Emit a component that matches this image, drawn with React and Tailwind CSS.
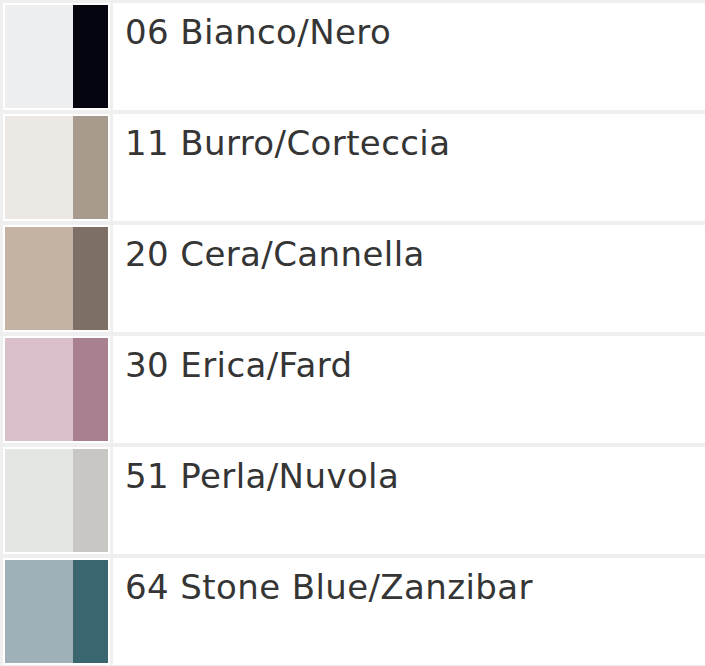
import React from "react";

const rows = [
  { label: "06 Bianco/Nero", a: "#eceeef", b: "#05050f" },
  { label: "11 Burro/Corteccia", a: "#ece9e4", b: "#a89b8e" },
  { label: "20 Cera/Cannella", a: "#c4b2a3", b: "#7d6e66" },
  { label: "30 Erica/Fard", a: "#d8bfc9", b: "#a8808f" },
  { label: "51 Perla/Nuvola", a: "#e3e6e3", b: "#c8c7c3" },
  { label: "64 Stone Blue/Zanzibar", a: "#9fb0b8", b: "#3a6670" },
];

export default function App() {
  return (
    <div className="w-[705px] h-[666px] bg-[#efefef] pt-[3px] pl-[3px] overflow-hidden">
      <div className="grid grid-cols-[107px_1fr] gap-x-[3px] gap-y-[4px]">
        {rows.map((r) => (
          <React.Fragment key={r.label}>
            <div className="bg-white h-[107px] p-[2px] flex">
              <div className="w-[68px] h-full" style={{ backgroundColor: r.a }} />
              <div className="w-[35px] h-full" style={{ backgroundColor: r.b }} />
            </div>
            <div className="bg-white h-[107px] pl-[12px] pt-[9px]">
              <span className="text-[34px] leading-[40px] tracking-[0.4px] text-[#353535] font-['DejaVu_Sans',sans-serif]">
                {r.label}
              </span>
            </div>
          </React.Fragment>
        ))}
      </div>
    </div>
  );
}
